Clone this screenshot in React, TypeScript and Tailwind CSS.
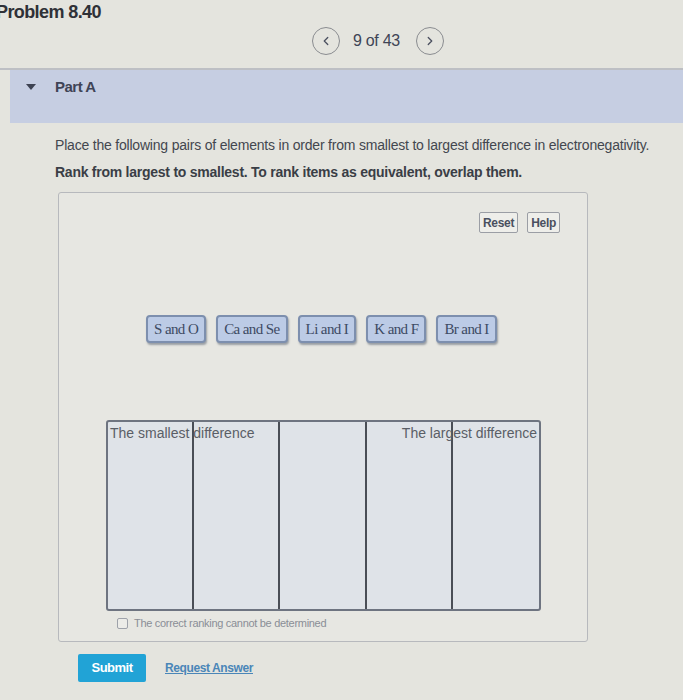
import { ChevronLeft, ChevronRight } from 'lucide-react';

const items = ['S and O', 'Ca and Se', 'Li and I', 'K and F', 'Br and I'];

function ItemCard({ label }: { label: string }) {
  return (
    <div className="h-[28px] px-[6px] flex items-center rounded-[4px] border-2 border-[#7d8fae] bg-[#bccbe6] shadow-[1px_2px_2px_rgba(60,70,90,0.45)] text-[15px] text-[#3d4a63] font-['Liberation_Serif',serif] tracking-[-0.6px]">
      {label}
    </div>
  );
}

export default function App() {
  return (
    <div className="w-[683px] h-[700px] overflow-hidden bg-[#e4e4de] font-['Liberation_Sans',Arial,sans-serif] text-[#3b3f47]">
      <div className="h-[68px] relative">
        <div className="absolute left-[-4px] top-0 text-[18px] leading-[24px] font-bold text-[#2f3137] tracking-[-0.6px]">
          Problem 8.40
        </div>
        <div className="absolute left-[312px] top-[27px] flex items-center">
          <div className="w-[28px] h-[28px] rounded-full border border-[#8a8c90] flex items-center justify-center">
            <ChevronLeft size={14} strokeWidth={2.2} className="text-[#4b5060]" />
          </div>
          <span className="ml-[13px] text-[16px] text-[#3f4456] tracking-[-0.3px]">9 of 43</span>
          <div className="ml-[16px] w-[28px] h-[28px] rounded-full border border-[#8a8c90] flex items-center justify-center">
            <ChevronRight size={14} strokeWidth={2.2} className="text-[#4b5060]" />
          </div>
        </div>
      </div>

      <div className="border-t-2 border-[#bdbfc4] pl-[10px]">
        <div className="h-[53px] bg-[#c6cee2] flex items-start pt-[7px]">
          <span className="ml-[16px] mt-[7px] w-0 h-0 border-l-[5px] border-r-[5px] border-t-[6px] border-l-transparent border-r-transparent border-t-[#3d4252]" />
          <span className="ml-[19px] text-[15px] leading-[20px] font-bold text-[#3f4456] tracking-[-0.5px]">Part A</span>
        </div>
      </div>

      <div className="pl-[55px] pt-[13px]">
        <p className="text-[14px] leading-[18px] text-[#43474f] tracking-[-0.2px]">
          Place the following pairs of elements in order from smallest to largest difference in electronegativity.
        </p>
        <p className="mt-[9px] text-[14px] leading-[18px] font-bold text-[#3a3e46] tracking-[-0.25px]">
          Rank from largest to smallest. To rank items as equivalent, overlap them.
        </p>

        <div className="mt-[11px] ml-[3px] w-[530px] h-[450px] border border-[#b7b9bd] rounded-[3px] bg-[#e7e7e2] pt-[19px]">
          <div className="flex justify-end gap-[9px] pr-[27px]">
            <button className="h-[21px] px-[3px] border border-[#9b9ea5] rounded-[2px] bg-[#eeeeea] text-[12px] font-bold text-[#4a5060] tracking-[-0.3px]">
              Reset
            </button>
            <button className="h-[21px] px-[3px] border border-[#9b9ea5] rounded-[2px] bg-[#eeeeea] text-[12px] font-bold text-[#4a5060] tracking-[-0.3px]">
              Help
            </button>
          </div>

          <div className="mt-[82px] ml-[87px] flex gap-[10px]">
            {items.map((it) => (
              <ItemCard key={it} label={it} />
            ))}
          </div>

          <div className="mt-[77px] ml-[47px] w-[435px] h-[191px] border-2 border-[#6e7480] rounded-[3px] bg-[#dfe3e8] grid grid-cols-5 relative">
            {[0, 1, 2, 3, 4].map((i) => (
              <div key={i} className={i < 4 ? 'border-r-2 border-[#4a4e56]' : ''} />
            ))}
            <span className="absolute left-[2px] top-[1px] text-[14px] text-[#5a5e66]">
              The smallest difference
            </span>
            <span className="absolute right-[2px] top-[1px] text-[14px] text-[#5a5e66]">
              The largest difference
            </span>
          </div>

          <label className="mt-[4px] ml-[58px] flex items-center gap-[6px] text-[11px] text-[#8a8e96] tracking-[-0.3px]">
            <span className="w-[11px] h-[11px] border border-[#9ea2aa] rounded-[2px] bg-[#ecece8]" />
            The correct ranking cannot be determined
          </label>
        </div>

        <div className="mt-[12px] ml-[23px] flex items-center gap-[19px]">
          <button className="h-[28px] w-[68px] rounded-[2px] bg-[#21a3d6] text-white text-[13px] font-bold tracking-[-0.5px]">
            Submit
          </button>
          <a className="text-[12px] font-bold text-[#4a86b8] underline tracking-[-0.4px]">Request Answer</a>
        </div>
      </div>
    </div>
  );
}
